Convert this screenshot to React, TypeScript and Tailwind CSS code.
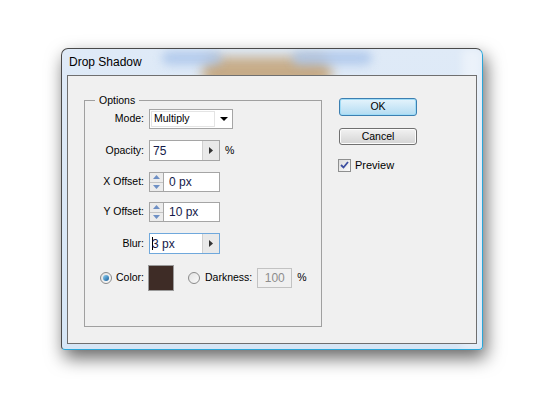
import React from "react";

const font = "font-['Liberation_Sans',Arial,sans-serif]";

function Arrow() {
  return (
    <div className="flex w-[17px] items-center justify-center border-l border-[#d0d0d0] bg-[#e9e9e9]">
      <svg width="4" height="7" viewBox="0 0 4 7">
        <path d="M0 0 L4 3.5 L0 7 Z" fill="#333" />
      </svg>
    </div>
  );
}

function Spinner() {
  return (
    <div className="flex w-[14px] flex-col border-r border-[#a8a8a8] bg-[#ececec]">
      <div className="flex flex-1 items-center justify-center border-b border-[#c4c4c4]">
        <svg width="7" height="4" viewBox="0 0 7 4">
          <path d="M0 4 L3.5 0 L7 4 Z" fill="#6d8fc4" />
        </svg>
      </div>
      <div className="flex flex-1 items-center justify-center">
        <svg width="7" height="4" viewBox="0 0 7 4">
          <path d="M0 0 L3.5 4 L7 0 Z" fill="#6d8fc4" />
        </svg>
      </div>
    </div>
  );
}

function Row({ label, children, mt }: { label: string; children: React.ReactNode; mt: string }) {
  return (
    <div className={`flex items-center ${mt}`}>
      <div className="w-[64px] pr-[5px] text-right">{label}</div>
      {children}
    </div>
  );
}

function Radio({ on }: { on: boolean }) {
  return (
    <div className="flex h-[12px] w-[12px] items-center justify-center rounded-full border border-[#8a8a8a] bg-gradient-to-br from-[#e2e2e2] to-[#fafafa]">
      {on && <div className="h-[6px] w-[6px] rounded-full bg-gradient-to-br from-[#8fd3f5] to-[#0c5c99]" />}
    </div>
  );
}

export default function App() {
  return (
    <div className={`relative h-[400px] w-[550px] overflow-hidden bg-white pl-[61px] pt-[48px] text-[10.5px] text-black ${font}`}>
      <div className="relative flex h-[302px] w-[422px] flex-col overflow-hidden rounded-t-[7px] rounded-b-[4px] border border-[#4a4a4a] border-b-[#2aa6d8] border-r-[#2aa6d8] bg-gradient-to-b from-[#dfeaf7] to-[#d6e6f6] shadow-[3px_8px_18px_rgba(0,0,0,0.6)]">
        {/* blurred background seen through the glass */}
        <div className="pointer-events-none absolute left-[140px] top-[8px] h-[30px] w-[130px] rounded-full bg-[#c4a57c] opacity-90 blur-[6px]" />
        <div className="pointer-events-none absolute left-[100px] top-[2px] h-[14px] w-[60px] rounded-full bg-[#a9c4ea] opacity-80 blur-[5px]" />
        <div className="pointer-events-none absolute left-[230px] top-[2px] h-[14px] w-[80px] rounded-full bg-[#a9c4ea] opacity-80 blur-[5px]" />
        <div className="pointer-events-none absolute left-[400px] top-0 h-[300px] w-[20px] bg-white opacity-40 blur-[4px]" />

        <div className="relative flex h-[26px] items-center pl-[7px] text-[12px]">Drop Shadow</div>

        <div className="relative mx-[5px] mb-[5px] flex flex-1 border border-[#6f6f6f] bg-[#f0f0f0] pl-[16px]">
          <fieldset className="mb-[16px] mt-[17px] w-[238px] border border-[#a0a0a0] px-0 pb-0">
            <legend className="ml-[10px] px-[4px] leading-[14px]">Options</legend>

            <Row label="Mode:" mt="mt-[2px]">
              <div className="flex h-[20px] w-[84px] items-center border border-[#a5a5a5] bg-white">
                <div className="ml-[1px] flex h-[16px] w-[64px] items-center border border-[#e4e4e4] pl-[2px]">Multiply</div>
                <div className="flex flex-1 items-center justify-center">
                  <svg width="8" height="4" viewBox="0 0 8 4">
                    <path d="M0 0 L8 0 L4 4 Z" fill="#000" />
                  </svg>
                </div>
              </div>
            </Row>

            <Row label="Opacity:" mt="mt-[11px]">
              <div className="flex h-[21px] w-[71px] border border-[#a5a5a5] bg-white">
                <div className="flex flex-1 items-center pl-[3px] text-[12px] text-[#141a4a]">75</div>
                <Arrow />
              </div>
              <span className="ml-[5px]">%</span>
            </Row>

            <Row label="X Offset:" mt="mt-[11px]">
              <div className="flex h-[20px] w-[71px] border border-[#a5a5a5] bg-white">
                <Spinner />
                <div className="flex flex-1 items-center pl-[5px] text-[12px] text-[#141a4a]">0 px</div>
              </div>
            </Row>

            <Row label="Y Offset:" mt="mt-[10px]">
              <div className="flex h-[20px] w-[71px] border border-[#a5a5a5] bg-white">
                <Spinner />
                <div className="flex flex-1 items-center pl-[5px] text-[12px] text-[#141a4a]">10 px</div>
              </div>
            </Row>

            <Row label="Blur:" mt="mt-[11px]">
              <div className="flex h-[21px] w-[71px] border border-[#6fa8dc] bg-white">
                <div className="flex flex-1 items-center pl-[2px] text-[12px] text-[#141a4a]">
                  <span className="mr-[-1px] inline-block h-[13px] w-[1px] bg-black" />3 px
                </div>
                <Arrow />
              </div>
            </Row>

            <div className="mt-[11px] flex items-center">
              <div className="ml-[15px] flex items-center gap-[4px]">
                <Radio on />
                <span>Color:</span>
              </div>
              <div className="ml-[4px] h-[26px] w-[26px] border border-[#9a9a9a] bg-[#3e2c26]" />
              <div className="ml-[14px] flex items-center gap-[5px]">
                <Radio on={false} />
                <span>Darkness:</span>
              </div>
              <div className="ml-[5px] flex h-[20px] w-[35px] items-center justify-center border border-[#c2c2c2] text-[12px] text-[#8d8d8d]">
                100
              </div>
              <span className="ml-[5px]">%</span>
            </div>
          </fieldset>

          <div className="ml-[17px] mt-[22px] flex flex-col">
            <div className="flex h-[18px] w-[78px] items-center justify-center rounded-[3px] border border-[#3c7fb1] bg-gradient-to-b from-[#e5f4fc] to-[#b3dcf2] shadow-[inset_0_0_0_1px_#9fdcf7]">
              OK
            </div>
            <div className="mt-[12px] flex h-[17px] w-[78px] items-center justify-center rounded-[3px] border border-[#707070] bg-gradient-to-b from-[#f2f2f2] to-[#d4d4d4] shadow-[inset_0_0_0_1px_#fcfcfc]">
              Cancel
            </div>
            <div className="ml-[-1px] mt-[12px] flex items-center gap-[4px]">
              <div className="flex h-[13px] w-[13px] items-center justify-center border border-[#8e8f8f] bg-gradient-to-br from-[#dcdcdc] to-[#fbfbfb]">
                <svg width="9" height="8" viewBox="0 0 9 8">
                  <path d="M1 4 L3.5 6.5 L8 1" stroke="#3d4fa0" strokeWidth="1.8" fill="none" />
                </svg>
              </div>
              <span className="text-[11px]">Preview</span>
            </div>
          </div>
        </div>
      </div>
    </div>
  );
}
